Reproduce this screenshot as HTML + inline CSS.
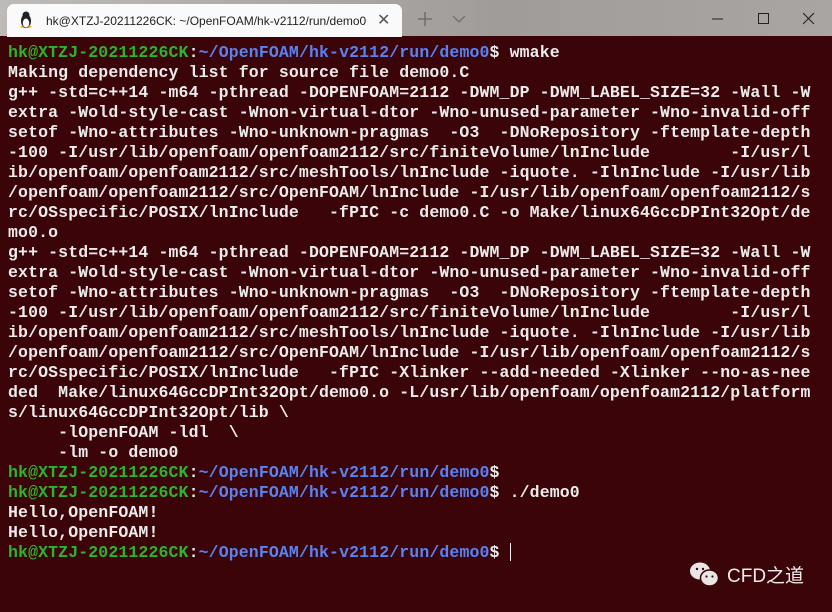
<!DOCTYPE html>
<html><head><meta charset="utf-8"><style>
html,body{margin:0;padding:0;width:832px;height:612px;overflow:hidden;background:#3a0408}
.top{position:absolute;left:0;top:0;width:832px;height:36px;background:linear-gradient(90deg,#bdbab8,#a09c99 60%,#a8a5a3)}
.tab{position:absolute;left:7px;top:4px;width:395px;height:33px;background:#fafafa;border-radius:7px 7px 0 0;font:12px "Liberation Sans",sans-serif;color:#222}
.tab .t{position:absolute;left:39px;top:10px}
.tab .x{position:absolute;left:370px;top:6px;font-size:16px;color:#555}
.term{position:absolute;left:8px;top:43px;font:bold 16.5px/20px "Liberation Mono","DejaVu Sans Mono",monospace;color:#ececec;white-space:pre;letter-spacing:0.13px}
.g{color:#2cb52c}.b{color:#5a82f2}
.wm{position:absolute;top:561px;font:19px "Liberation Sans","Noto Sans CJK SC",sans-serif;color:#f0eded}
</style></head><body>
<div class="top"></div>
<div class="tab">
<svg style="position:absolute;left:11px;top:7px" width="16" height="18" viewBox="0 0 16 18"><ellipse cx="8" cy="10" rx="5" ry="7" fill="#222"/><ellipse cx="8" cy="12" rx="3.2" ry="4.5" fill="#fff"/><circle cx="8" cy="4" r="3.5" fill="#222"/><path d="M2 16 L6 17 L5 14Z M14 16 L10 17 L11 14Z" fill="#e0a000"/></svg>
<span class="t">hk@XTZJ-20211226CK: ~/OpenFOAM/hk-v2112/run/demo0</span><span class="x">✕</span></div>
<svg style="position:absolute;left:418px;top:12px" width="14" height="14"><path d="M7 0V14M0 7H14" stroke="#666" stroke-width="1.3"/></svg>
<svg style="position:absolute;left:453px;top:16px" width="12" height="7"><path d="M0 0L6 6L12 0" stroke="#666" fill="none" stroke-width="1.1"/></svg>
<svg style="position:absolute;left:712px;top:18px" width="12" height="2"><path d="M0 1H11" stroke="#222" stroke-width="1"/></svg>
<svg style="position:absolute;left:758px;top:13px" width="11" height="11"><rect x=".5" y=".5" width="10" height="10" fill="none" stroke="#222"/></svg>
<svg style="position:absolute;left:803px;top:13px" width="12" height="12"><path d="M0 0L11 11M11 0L0 11" stroke="#222" stroke-width="1.1"/></svg>
<div class="term"><span class="g">hk@XTZJ-20211226CK</span>:<span class="b">~/OpenFOAM/hk-v2112/run/demo0</span>$ wmake
Making dependency list for source file demo0.C
g++ -std=c++14 -m64 -pthread -DOPENFOAM=2112 -DWM_DP -DWM_LABEL_SIZE=32 -Wall -W
extra -Wold-style-cast -Wnon-virtual-dtor -Wno-unused-parameter -Wno-invalid-off
setof -Wno-attributes -Wno-unknown-pragmas  -O3  -DNoRepository -ftemplate-depth
-100 -I/usr/lib/openfoam/openfoam2112/src/finiteVolume/lnInclude        -I/usr/l
ib/openfoam/openfoam2112/src/meshTools/lnInclude -iquote. -IlnInclude -I/usr/lib
/openfoam/openfoam2112/src/OpenFOAM/lnInclude -I/usr/lib/openfoam/openfoam2112/s
rc/OSspecific/POSIX/lnInclude   -fPIC -c demo0.C -o Make/linux64GccDPInt32Opt/de
mo0.o
g++ -std=c++14 -m64 -pthread -DOPENFOAM=2112 -DWM_DP -DWM_LABEL_SIZE=32 -Wall -W
extra -Wold-style-cast -Wnon-virtual-dtor -Wno-unused-parameter -Wno-invalid-off
setof -Wno-attributes -Wno-unknown-pragmas  -O3  -DNoRepository -ftemplate-depth
-100 -I/usr/lib/openfoam/openfoam2112/src/finiteVolume/lnInclude        -I/usr/l
ib/openfoam/openfoam2112/src/meshTools/lnInclude -iquote. -IlnInclude -I/usr/lib
/openfoam/openfoam2112/src/OpenFOAM/lnInclude -I/usr/lib/openfoam/openfoam2112/s
rc/OSspecific/POSIX/lnInclude   -fPIC -Xlinker --add-needed -Xlinker --no-as-nee
ded  Make/linux64GccDPInt32Opt/demo0.o -L/usr/lib/openfoam/openfoam2112/platform
s/linux64GccDPInt32Opt/lib \
     -lOpenFOAM -ldl  \
     -lm -o demo0
<span class="g">hk@XTZJ-20211226CK</span>:<span class="b">~/OpenFOAM/hk-v2112/run/demo0</span>$
<span class="g">hk@XTZJ-20211226CK</span>:<span class="b">~/OpenFOAM/hk-v2112/run/demo0</span>$ ./demo0
Hello,OpenFOAM!
Hello,OpenFOAM!
<span class="g">hk@XTZJ-20211226CK</span>:<span class="b">~/OpenFOAM/hk-v2112/run/demo0</span>$ <span style="display:inline-block;width:1px;height:18px;background:#eee;vertical-align:-4px"></span></div>
<svg style="position:absolute;left:690px;top:562px" width="30" height="26" viewBox="0 0 30 26"><ellipse cx="10" cy="9" rx="10" ry="8.5" fill="#ebe6e6"/><ellipse cx="19.5" cy="16" rx="9" ry="8" fill="#ebe6e6" stroke="#3a0408" stroke-width="1.5"/><circle cx="7" cy="7" r="1.2" fill="#3a0408"/><circle cx="13" cy="7" r="1.2" fill="#3a0408"/><circle cx="16.5" cy="14.5" r="1.1" fill="#3a0408"/><circle cx="22.5" cy="14.5" r="1.1" fill="#3a0408"/></svg>
<div class="wm" style="left:727px">CFD之道</div>
</body></html>
